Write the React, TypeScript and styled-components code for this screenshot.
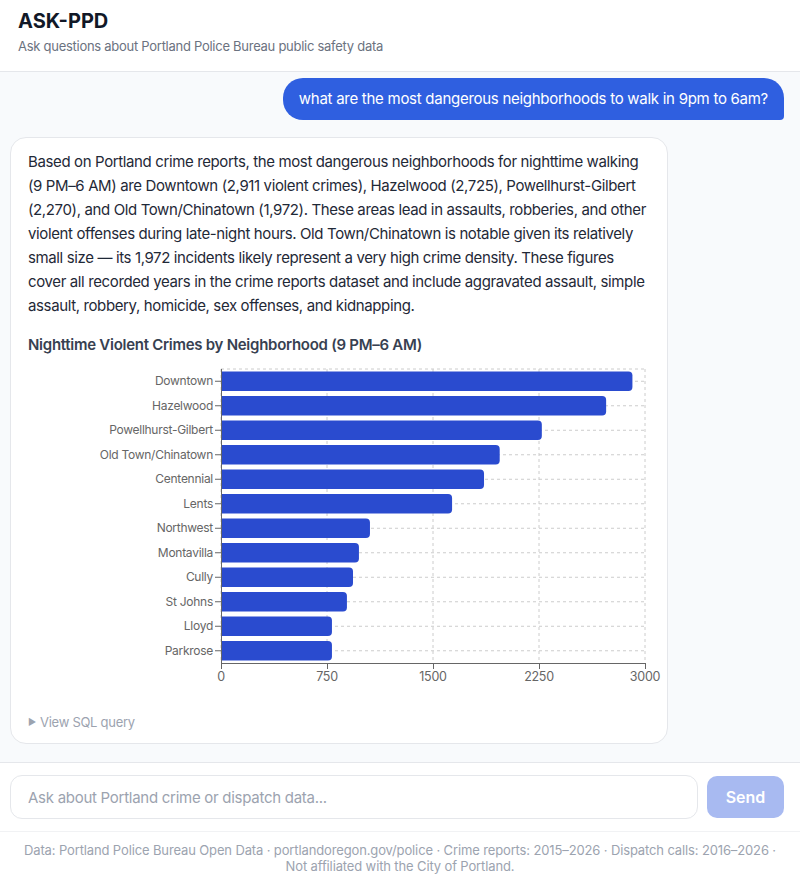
import React from 'react'
import styled, {createGlobalStyle} from 'styled-components'

const GlobalStyle = createGlobalStyle`
  * { box-sizing: border-box; }
  html, body { margin: 0; padding: 0; }
  body {
    font-family: Inter, "Noto Sans", "Liberation Sans", sans-serif;
    letter-spacing: -0.017em;
    background: #ffffff;
    color: #1f2937;
  }
`

const Page = styled.div`
  height: 100vh;
  display: flex;
  flex-direction: column;
`

const Header = styled.header`
  padding: 9px 18px 16px;
  border-bottom: 1px solid #e5e7eb;
  background: #fff;
`

const Title = styled.h1`
  margin: 0;
  font-size: 20px;
  line-height: 24px;
  font-weight: 700;
  letter-spacing: 0;
  color: #111827;
`

const Subtitle = styled.p`
  margin: 4px 0 0;
  font-size: 13px;
  line-height: 18px;
  color: #6b7280;
`

const Messages = styled.main`
  flex: 1;
  overflow: hidden;
  background: #f8fafc;
  padding: 6px 16px 20px 10px;
  display: flex;
  flex-direction: column;
  gap: 17px;
`

const UserBubble = styled.div`
  align-self: flex-end;
  background: #2f5fe0;
  color: #fff;
  font-size: 15px;
  line-height: 22px;
  padding: 10px 16px;
  border-radius: 20px 20px 4px 20px;
`

const AssistantCard = styled.div`
  width: 658px;
  background: #fff;
  border: 1px solid #e5e7eb;
  border-radius: 16px;
  padding: 12px 17px;
`

const Answer = styled.p`
  margin: 0;
  font-size: 15px;
  line-height: 24px;
  letter-spacing: -0.025em;
  color: #1f2937;
`

const ChartTitle = styled.h3`
  margin: 16px 0 4px;
  font-size: 15px;
  line-height: 22px;
  font-weight: 600;
  color: #374151;
`

const ChartSvg = styled.svg`
  display: block;
  overflow: visible;
  font-family: Inter, "Noto Sans", "Liberation Sans", sans-serif;
`

const SqlToggle = styled.div`
  margin-top: 23px;
  font-size: 13px;
  line-height: 18px;
  color: #9ca3af;
  display: flex;
  align-items: center;
  gap: 4px;
`

const Caret = styled.span`
  font-size: 9px;
`

const InputBar = styled.form`
  display: flex;
  gap: 9px;
  padding: 12px 16px 12px 10px;
  border-top: 1px solid #e5e7eb;
  background: #fff;
`

const TextInput = styled.input`
  flex: 1;
  height: 44px;
  border: 1px solid #e5e7eb;
  border-radius: 12px;
  padding: 0 17px;
  font-family: inherit;
  letter-spacing: inherit;
  font-size: 15px;
  color: #1f2937;
  outline: none;
  &::placeholder { color: #9ca3af; }
`

const SendButton = styled.button`
  width: 77px;
  height: 42px;
  margin-top: 1px;
  border: none;
  border-radius: 10px;
  background: #a8baf1;
  color: #fff;
  font-family: inherit;
  font-size: 16px;
  font-weight: 600;
`

const Footer = styled.footer`
  border-top: 1px solid #f1f2f4;
  padding: 10px 16px 6px;
  text-align: center;
  font-size: 13px;
  line-height: 16px;
  letter-spacing: -0.01em;
  color: #9ca3af;
  background: #fff;
`

const data = [
  {name: 'Downtown', value: 2911},
  {name: 'Hazelwood', value: 2725},
  {name: 'Powellhurst-Gilbert', value: 2270},
  {name: 'Old Town/Chinatown', value: 1972},
  {name: 'Centennial', value: 1861},
  {name: 'Lents', value: 1635},
  {name: 'Northwest', value: 1054},
  {name: 'Montavilla', value: 976},
  {name: 'Cully', value: 934},
  {name: 'St Johns', value: 891},
  {name: 'Lloyd', value: 785},
  {name: 'Parkrose', value: 785},
]

const ticks = [0, 750, 1500, 2250, 3000]

// plot geometry in svg coords
const left = 193
const right = 617
const top = 9
const band = 24.5
const bottom = top + band * data.length
const sx = (v: number) => left + ((right - left) * v) / 3000

const barPath = (x0: number, x1: number, y: number, h: number) => {
  const r = 4
  return `M${x0},${y} H${x1 - r} A${r},${r} 0 0 1 ${x1},${y + r} V${y + h - r} A${r},${r} 0 0 1 ${x1 - r},${y + h} H${x0} Z`
}

const BarChart = () => (
  <ChartSvg width={622} height={330} viewBox='0 0 622 330'>
    <g stroke='#cccccc' strokeDasharray='3 3' strokeWidth={1}>
      <line x1={left} x2={right} y1={top} y2={top} />
      {data.map((d, i) => (
        <line key={d.name} x1={left} x2={right} y1={top + band * i + band / 2} y2={top + band * i + band / 2} />
      ))}
      {ticks.map((t) => (
        <line key={t} x1={sx(t)} x2={sx(t)} y1={top} y2={bottom} />
      ))}
    </g>
    {data.map((d, i) => {
      const y = top + band * i + band * 0.1
      return <path key={d.name} d={barPath(left + 1, sx(d.value), y, band * 0.8)} fill='#2a4bcf' />
    })}
    <g stroke='#666666' strokeWidth={1}>
      <line x1={left + 0.5} x2={left + 0.5} y1={top} y2={bottom} />
      <line x1={left} x2={right} y1={bottom + 0.5} y2={bottom + 0.5} />
      {data.map((d, i) => (
        <line key={d.name} x1={left - 6} x2={left} y1={top + band * i + band / 2} y2={top + band * i + band / 2} />
      ))}
      {ticks.map((t) => (
        <line key={t} x1={sx(t) + 0.5} x2={sx(t) + 0.5} y1={bottom} y2={bottom + 6} />
      ))}
    </g>
    <g fill='#666666' fontSize={12}>
      {data.map((d, i) => (
        <text key={d.name} x={left - 8} y={top + band * i + band / 2 + 4} textAnchor='end'>
          {d.name}
        </text>
      ))}
      {ticks.map((t) => (
        <text key={t} x={sx(t)} y={bottom + 18} textAnchor='middle' fontSize={12.5}>
          {t}
        </text>
      ))}
    </g>
  </ChartSvg>
)

export default function App() {
  return (
    <Page>
      <GlobalStyle />
      <Header>
        <Title>ASK-PPD</Title>
        <Subtitle>Ask questions about Portland Police Bureau public safety data</Subtitle>
      </Header>
      <Messages>
        <UserBubble>what are the most dangerous neighborhoods to walk in 9pm to 6am?</UserBubble>
        <AssistantCard>
          <Answer>
            Based on Portland crime reports, the most dangerous neighborhoods for nighttime walking
            (9 PM–6 AM) are Downtown (2,911 violent crimes), Hazelwood (2,725), Powellhurst-Gilbert
            (2,270), and Old Town/Chinatown (1,972). These areas lead in assaults, robberies, and other
            violent offenses during late-night hours. Old Town/Chinatown is notable given its relatively
            small size — its 1,972 incidents likely represent a very high crime density. These figures
            cover all recorded years in the crime reports dataset and include aggravated assault, simple
            assault, robbery, homicide, sex offenses, and kidnapping.
          </Answer>
          <ChartTitle>Nighttime Violent Crimes by Neighborhood (9 PM–6 AM)</ChartTitle>
          <BarChart />
          <SqlToggle>
            <Caret>▶</Caret>
            View SQL query
          </SqlToggle>
        </AssistantCard>
      </Messages>
      <InputBar onSubmit={(e) => e.preventDefault()}>
        <TextInput placeholder='Ask about Portland crime or dispatch data...' />
        <SendButton type='submit'>Send</SendButton>
      </InputBar>
      <Footer>
        Data: Portland Police Bureau Open Data · portlandoregon.gov/police · Crime reports: 2015–2026 · Dispatch calls: 2016–2026 ·
        <br />
        Not affiliated with the City of Portland.
      </Footer>
    </Page>
  )
}
